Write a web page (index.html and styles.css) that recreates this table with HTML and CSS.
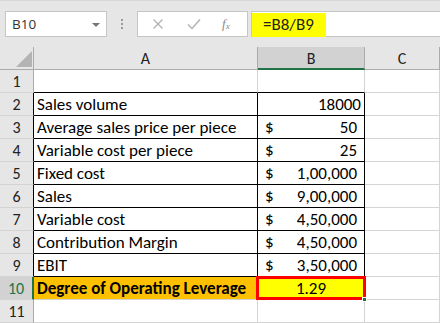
FILE: index.html
```html
<!DOCTYPE html>
<html>
<head>
<meta charset="utf-8">
<link rel="stylesheet" href="styles.css">
</head>
<body>
<div class="app">
  <div class="toolbar">
    <div class="namebox"><span class="ref">B10</span><span class="caret"></span></div>
    <div class="grip"><i></i><i></i><i></i></div>
    <div class="fnbox">
      <svg class="ico" width="12" height="12" viewBox="0 0 12 12"><path d="M1.5 1.5 L10.5 10.5 M10.5 1.5 L1.5 10.5" stroke="#b3b3b3" stroke-width="1.4" fill="none"/></svg>
      <svg class="ico" width="14" height="12" viewBox="0 0 14 12"><path d="M1 6.5 L5 10.5 L13 1.5" stroke="#b3b3b3" stroke-width="1.5" fill="none"/></svg>
      <span class="fx">f<sub>x</sub></span>
    </div>
    <div class="formula"><span class="ftext">=B8/B9</span></div>
  </div>
  <div class="sheet">
    <div class="c corner"><span class="tri"></span></div>
    <div class="c colh">A</div>
    <div class="c colh sel">B</div>
    <div class="c colh">C</div>

    <div class="c rowh">1</div><div class="c a bb"></div><div class="c b bb"></div><div class="c"></div>

    <div class="c rowh br">2</div><div class="c a box">Sales volume</div><div class="c b box num">18000</div><div class="c"></div>
    <div class="c rowh br">3</div><div class="c a box">Average sales price per piece</div><div class="c b box acc"><span>$</span><span>50</span></div><div class="c"></div>
    <div class="c rowh br">4</div><div class="c a box">Variable cost per piece</div><div class="c b box acc"><span>$</span><span>25</span></div><div class="c"></div>
    <div class="c rowh br">5</div><div class="c a box">Fixed cost</div><div class="c b box acc"><span>$</span><span>1,00,000</span></div><div class="c"></div>
    <div class="c rowh br">6</div><div class="c a box">Sales</div><div class="c b box acc"><span>$</span><span>9,00,000</span></div><div class="c"></div>
    <div class="c rowh br">7</div><div class="c a box">Variable cost</div><div class="c b box acc"><span>$</span><span>4,50,000</span></div><div class="c"></div>
    <div class="c rowh br">8</div><div class="c a box">Contribution Margin</div><div class="c b box acc"><span>$</span><span>4,50,000</span></div><div class="c"></div>
    <div class="c rowh br">9</div><div class="c a box">EBIT</div><div class="c b box acc"><span>$</span><span>3,50,000</span></div><div class="c"></div>

    <div class="c rowh selrow">10</div><div class="c a orange">Degree of Operating Leverage</div><div class="c b yellow">1.29<span class="handle"></span></div><div class="c"></div>
    <div class="c rowh">11</div><div class="c a"></div><div class="c b"></div><div class="c"></div>
  </div>
</div>
</body>
</html>
```
FILE: styles.css
```css
* { box-sizing: border-box; }
html, body { margin: 0; padding: 0; }
body { width: 440px; height: 323px; overflow: hidden; background: #fff; }
.app { width: 440px; }

.toolbar {
  height: 47px;
  background: #e6e6e6;
  border-top: 1px solid #d6d6d6;
  display: flex;
  align-items: flex-start;
  padding-top: 10px;
  padding-left: 5px;
}
.namebox {
  width: 102px; height: 26px;
  background: #fff;
  border: 1px solid #c6c6c6;
  display: flex; align-items: center; justify-content: space-between;
  padding: 0 6px 0 6px;
  font-family: "Open Sans", sans-serif; font-size: 13.5px; color: #333;
}
.caret { width: 0; height: 0; border-left: 4px solid transparent; border-right: 4px solid transparent; border-top: 4px solid #777; margin-top: 1px; }
.grip { width: 30px; height: 26px; display: flex; flex-direction: column; align-items: center; justify-content: center; gap: 2px; }
.grip i { display: block; width: 2px; height: 2px; background: #9a9a9a; }
.fnbox {
  width: 111px; height: 26px;
  background: #fff;
  border: 1px solid #c6c6c6;
  display: flex; align-items: center;
  padding-left: 14px;
}
.fnbox .ico:nth-child(1) { margin-right: 23px; }
.fnbox .ico:nth-child(2) { margin-right: 21px; }
.fx { font-family: "Liberation Serif", serif; font-style: italic; color: #8a8a8a; font-size: 13px; line-height: 1; }
.fx sub { font-size: 9px; vertical-align: -1px; }
.formula {
  flex: 1; height: 26px; margin-left: 3px;
  background: #fff;
  border: 1px solid #c6c6c6; border-right: none;
  padding: 1px 0;
}
.ftext {
  display: inline-block; height: 24px; width: 74px;
  background: #ffff00;
  font-family: Carlito, Calibri, Lato, sans-serif; font-size: 17px;
  line-height: 24px; padding-left: 11px; color: #222;
}

.sheet {
  display: grid;
  grid-template-columns: 34px 224px 107px 1fr;
  grid-auto-rows: 23px;
  font-family: Carlito, Calibri, Lato, sans-serif;
  font-size: 17px;
  color: #000;
}
.c {
  border-right: 1px solid #d4d4d4;
  border-bottom: 1px solid #d4d4d4;
  line-height: 22px;
  white-space: nowrap;
  position: relative;
}
.corner, .colh, .rowh { background: #e6e6e6; color: #222; font-size: 16px; }
.corner { border-right: 1px solid #ababab; border-bottom: 1px solid #ababab; }
.tri { position: absolute; right: 1px; bottom: 2px; width: 0; height: 0; border-left: 16px solid transparent; border-bottom: 16px solid #b4b4b4; }
.colh { text-align: center; border-right: 1px solid #ababab; border-bottom: 1px solid #ababab; padding-top: 1px; }
.colh.sel { background: #d2d2d2; border-bottom: 2px solid #217346; }
.rowh { text-align: center; border-right: 1px solid #ababab; border-bottom: 1px solid #d4d4d4; padding-top: 1px; }
.rowh.br { border-right-color: #000; }
.rowh.selrow { background: #d2d2d2; color: #217346; border-right: 2px solid #217346; }

.a { padding-left: 3px; padding-top: 1px; }
.bb { border-bottom-color: #000; }
.box { border-bottom-color: #000; border-right-color: #000; }
.num { text-align: right; padding-right: 3px; padding-top: 1px; }
.acc { display: flex; justify-content: space-between; padding-left: 7px; padding-right: 7px; padding-top: 1px; }
.orange { background: #ffc000; font-weight: bold; padding-top: 1px; }
.yellow { background: #ffff00; text-align: center; padding-top: 1px; z-index: 2; }
.yellow::after { content: ""; position: absolute; left: -2px; right: -2px; top: -1px; bottom: -1px; border: 3px solid #ff0000; }
.handle { position: absolute; right: -3px; bottom: -3px; width: 5px; height: 5px; background: #217346; border: 1px solid #fff; z-index: 3; }
```
